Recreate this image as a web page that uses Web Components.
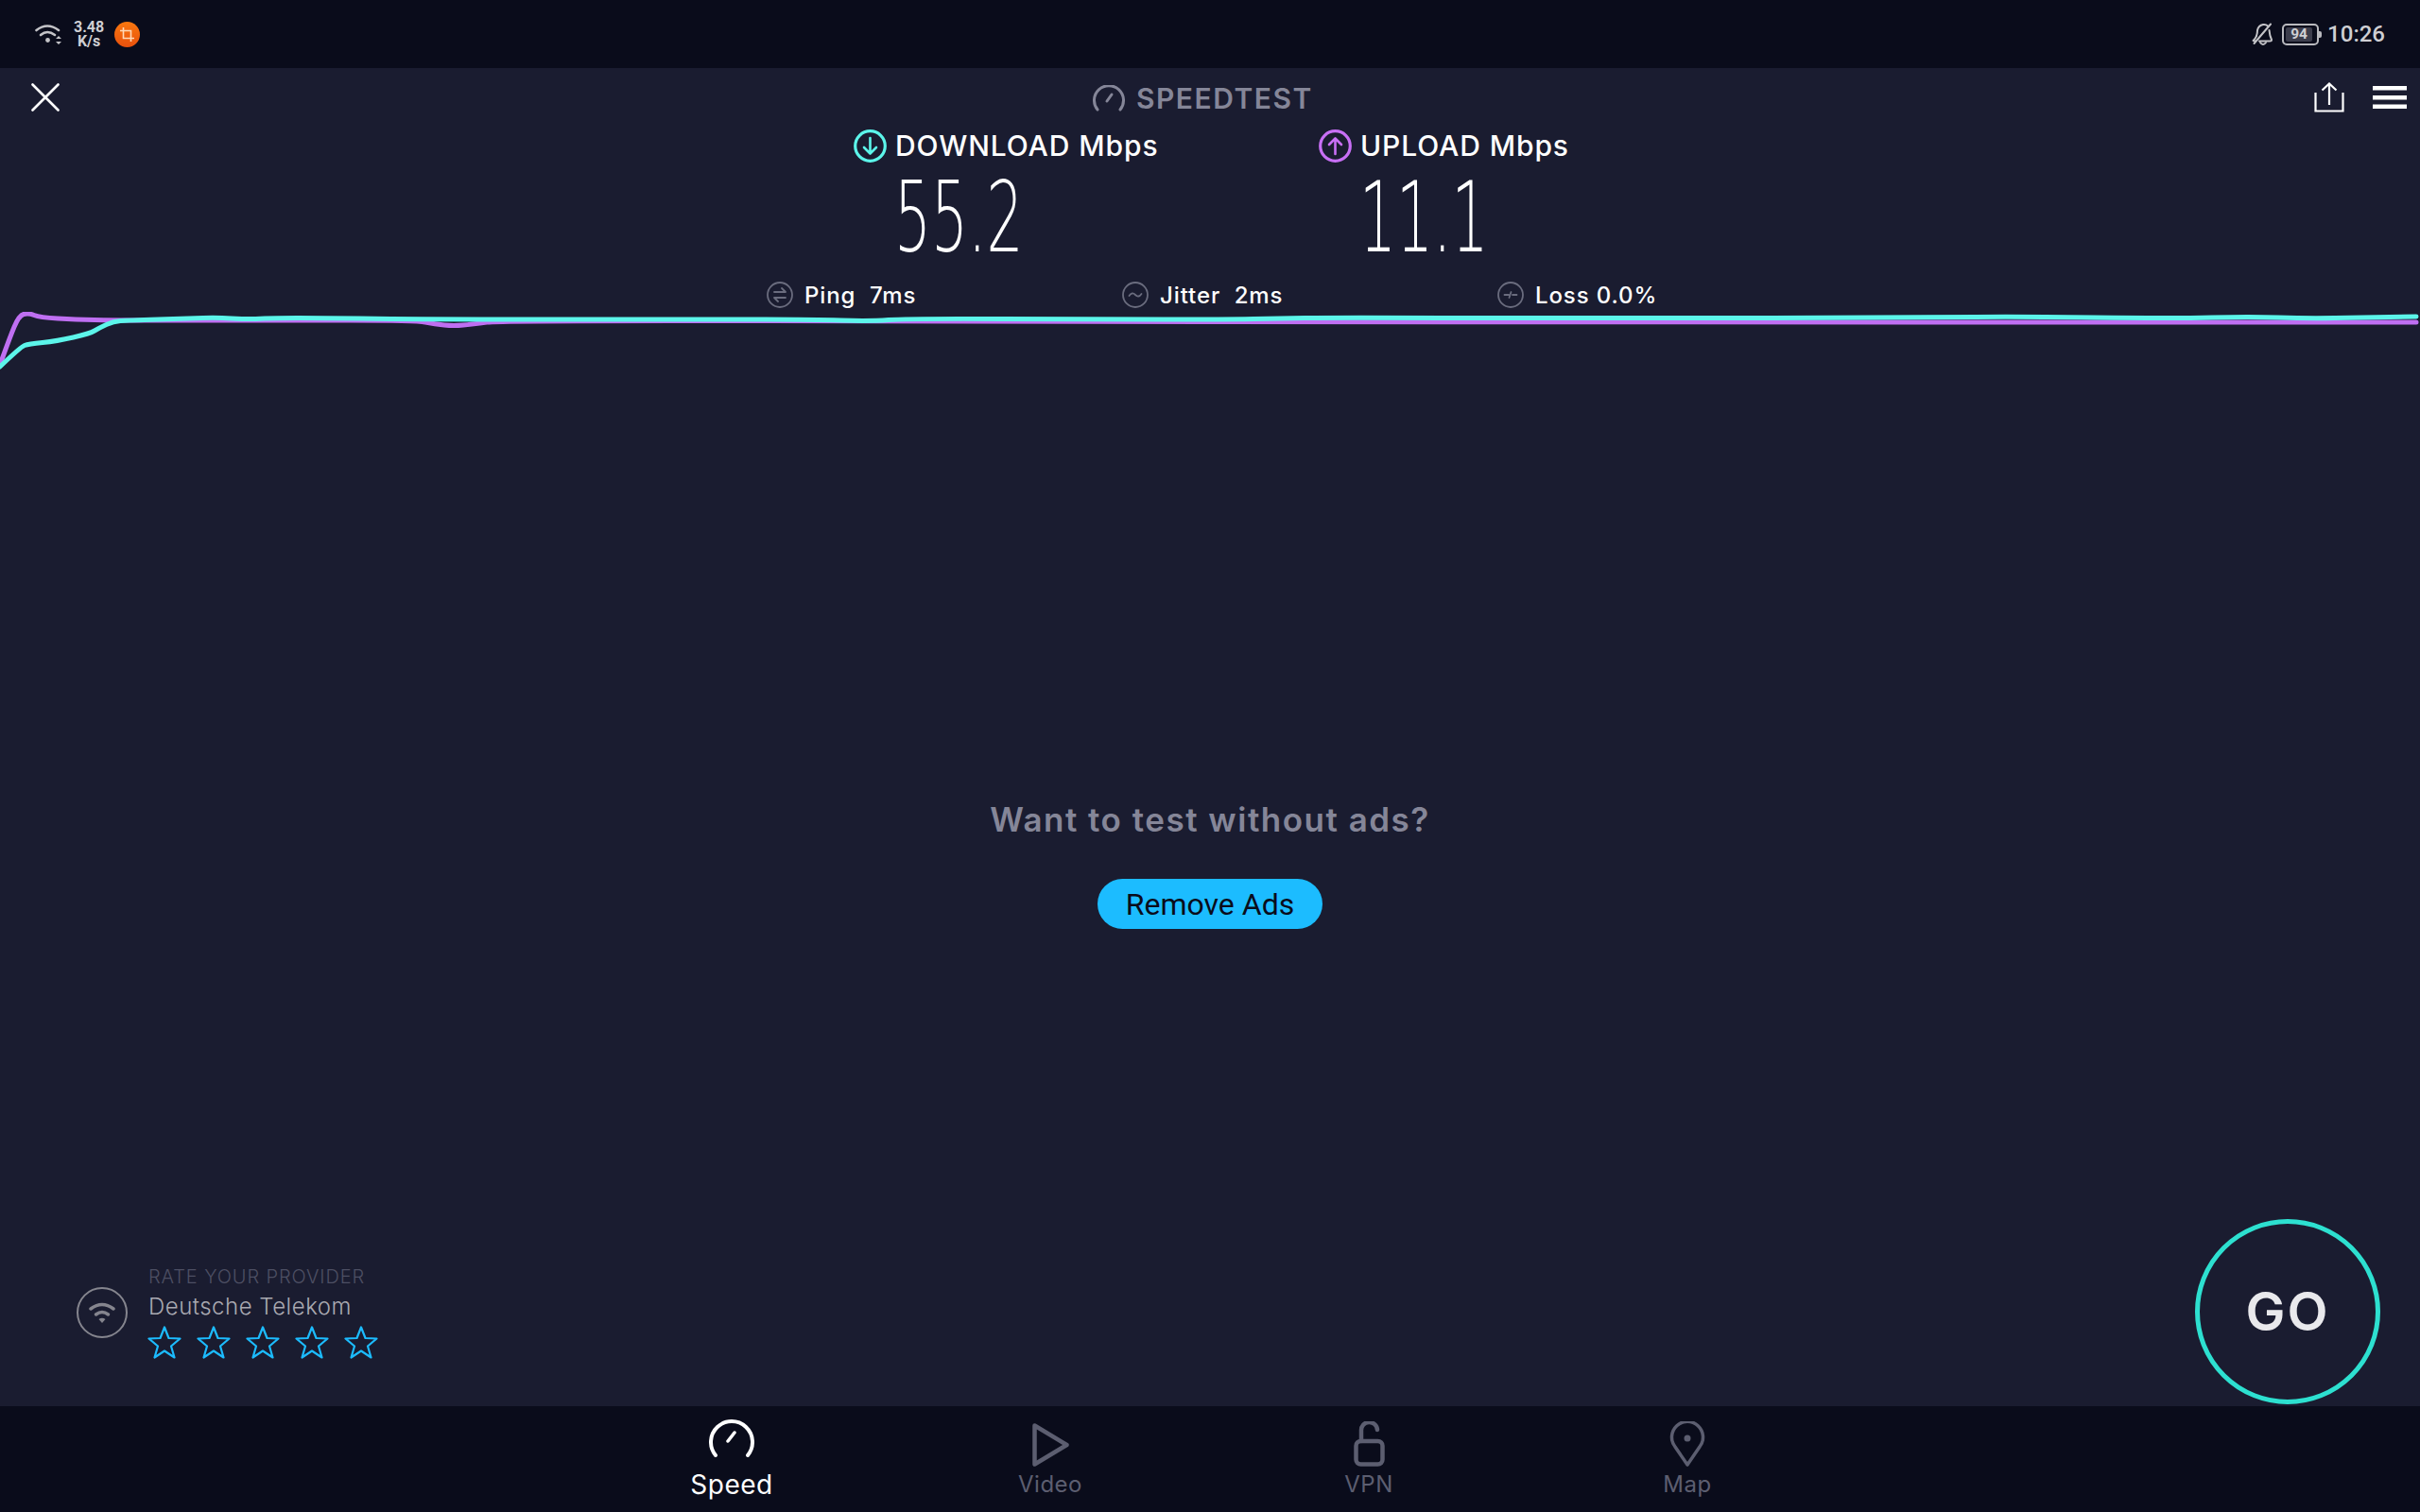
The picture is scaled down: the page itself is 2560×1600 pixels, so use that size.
<!DOCTYPE html>
<html>
<head>
<meta charset="utf-8">
<title>Speedtest</title>
<style>
    html, body { margin: 0; padding: 0; background: #1a1c30; }
    body { width: 2560px; height: 1600px; overflow: hidden; }
    speed-app { font-family: "Inter", "Noto Sans", sans-serif; }
</style>
</head>
<body>
<speed-app></speed-app>

<script>
// status bar on top of the app
class StatusBar extends HTMLElement {
    constructor() {
        super();
        this.attachShadow({ mode: 'open' }).innerHTML = `
            <style>
                :host { display: flex; align-items: center; height: 72px; background: #0a0c1b; color: #cfcfd3; font-family: "Roboto", sans-serif; padding: 0 37px; box-sizing: border-box; }
                .left, .right { display: flex; align-items: center; }
                .right { margin-left: auto; }
                .rate { font-size: 16px; font-weight: 700; line-height: 15px; text-align: center; margin-left: 11px; }
                .dot { width: 27px; height: 27px; border-radius: 50%; background: linear-gradient(#f9780f, #e8500d); margin-left: 11px; display: flex; align-items: center; justify-content: center; }
                .time { font-size: 24px; font-weight: 500; margin-left: 9px; }
                .batt { position: relative; width: 39px; height: 23px; border: 2px solid #b9b9be; border-radius: 5px; box-sizing: border-box; margin-left: 10px; display: flex; align-items: center; padding: 2px; }
                .batt::after { content: ""; position: absolute; right: -5px; top: 6px; width: 3px; height: 7px; background: #b9b9be; border-radius: 0 2px 2px 0; }
                .level { background: #3c3d4c; border-radius: 2px; height: 100%; width: 90%; font-size: 15.500px; font-weight: 700; line-height: 15px; text-align: center; }
                svg { display: block; }
            </style>
            <div class="left">
                <svg width="30" height="22" viewBox="0 0 30 22" fill="none" stroke="#c4c4c8" stroke-width="2.600" stroke-linecap="round">
                    <path d="M1.500 7 Q13 -2 25 7"/><path d="M6 12 Q13 6 21 12"/>
                    <circle cx="13.500" cy="17.500" r="2.400" fill="#c4c4c8" stroke="none"/>
                    <path d="M25 13 l3 3 h-6 z M25 22 l3 -3 h-6 z" fill="#c4c4c8" stroke="none"/>
                </svg>
                <div class="rate">3.48<br>K/s</div>
                <div class="dot">
                    <svg width="15" height="15" viewBox="0 0 15 15" fill="none" stroke="#ffd9b8" stroke-width="1.600"><path d="M3.500 0 V11.500 H15 M0 3.500 H11.500 V15"/></svg>
                </div>
            </div>
            <div class="right">
                <svg width="22" height="25" viewBox="0 0 22 25" fill="none" stroke="#c4c4c8" stroke-width="2" stroke-linecap="round" stroke-linejoin="round">
                    <path d="M5 14 Q6 11 6 8 Q7 3 12 2 Q15 1.500 17 3.500"/>
                    <path d="M18.500 8 Q19 14 21 18 Q21 19.500 19 19.500 H8"/>
                    <path d="M5 14 Q4 17 1.500 19 L4 19.500"/>
                    <path d="M20 1.500 L2.500 22"/><path d="M9 21 Q12 25 15 21"/>
                </svg>
                <div class="batt"><div class="level">94</div></div>
                <div class="time">10:26</div>
            </div>
        `;
    }
}

class AppHeader extends HTMLElement {
    constructor() {
        super();
        this.attachShadow({ mode: 'open' }).innerHTML = `
            <style>
                :host { display: grid; grid-template-columns: 1123px auto 1fr; align-items: center; height: 62px; padding: 0 14px 0 33px; }
                .title { display: flex; align-items: center; gap: 12px; color: #858698; font-size: 30px; font-weight: 600; letter-spacing: 1.500px; padding-top: 2px; }
                .actions { display: flex; justify-content: flex-end; align-items: center; gap: 30px; }
                svg { display: block; }
            </style>
            <svg width="30" height="30" viewBox="0 0 30 30" stroke="#fff" stroke-width="2.600" stroke-linecap="round"><path d="M1.500 1.500 L28.500 28.500 M28.500 1.500 L1.500 28.500"/></svg>
            <div class="title">
                <svg width="34" height="28" viewBox="0 0 34 28" fill="none" stroke="#858698" stroke-width="3" stroke-linecap="round"><path d="M5 26 A15.500 15.500 0 1 1 29 26"/><path d="M15 17 L20 10"/></svg>
                SPEEDTEST
            </div>
            <div class="actions">
                <svg width="32" height="32" viewBox="0 0 32 32" fill="none" stroke="#fff" stroke-width="2.200"><path d="M1.500 11 V30.500 H30.500 V11"/><path d="M16 24 V2 M8.500 8.500 L16 1.500 L23.500 8.500"/></svg>
                <svg width="36" height="24" viewBox="0 0 36 24" fill="#fff"><rect width="36" height="4.500" y="0"/><rect width="36" height="4.500" y="10"/><rect width="36" height="4.500" y="19.500"/></svg>
            </div>
        `;
    }
}

class ResultColumn extends HTMLElement {
    constructor() {
        super();
        const color = this.getAttribute('color');
        const arrow = this.getAttribute('dir') === 'up'
            ? 'M17.500 26 V10 M11 16 L17.500 9.500 L24 16'
            : 'M17.500 9 V25 M11 19 L17.500 25.500 L24 19';
        this.attachShadow({ mode: 'open' }).innerHTML = `
            <style>
                :host { display: block; }
                .label { display: flex; align-items: center; gap: 9px; color: #fff; font-size: 30px; font-weight: 500; letter-spacing: .9px; height: 36px; white-space: nowrap; }
                .num { color: #fff; font-family: "DejaVu Sans", sans-serif; font-weight: 200; font-size: 104px; line-height: 107px; margin: 5px 0 0 43px; transform: scaleX(.59); transform-origin: left center; white-space: nowrap; }
                svg { display: block; }
            </style>
            <div class="label">
                <svg width="35" height="35" viewBox="0 0 35 35" fill="none" stroke="${color}" stroke-width="2.600" stroke-linecap="round" stroke-linejoin="round">
                    <circle cx="17.500" cy="17.500" r="15.800" stroke-width="3.200"/><path d="${arrow}"/>
                </svg>
                <slot name="label"></slot>
            </div>
            <div class="num"><slot></slot></div>
        `;
    }
}

class SpeedResults extends HTMLElement {
    constructor() {
        super();
        this.attachShadow({ mode: 'open' }).innerHTML = `
            <style>
                :host { display: grid; grid-template-columns: 492px 320px; height: 161px; padding: 2px 0 0 903px; box-sizing: border-box; }
            </style>
            <slot></slot>
        `;
    }
}

class StatItem extends HTMLElement {
    constructor() {
        super();
        const glyphs = {
            ping: '<path d="M8 11 H20 L16 7 M20 17 H8 L12 21" stroke-linejoin="round"/>',
            jitter: '<path d="M7.500 15 Q10.500 10.500 14 14 T20.500 13" />',
            loss: '<path d="M7.500 14 H12 M12.500 17 L14.500 11 M16 14 H20.500"/>'
        };
        this.attachShadow({ mode: 'open' }).innerHTML = `
            <style>
                :host { display: flex; align-items: center; gap: 12px; color: #fff; font-size: 24px; font-weight: 500; letter-spacing: .9px; }
                .text { white-space: pre; }
                svg { display: block; flex: none; }
            </style>
            <svg width="28" height="28" viewBox="0 0 28 28" fill="none" stroke="#6a6c7e" stroke-width="1.800" stroke-linecap="round">
                <circle cx="14" cy="14" r="13"/>${glyphs[this.getAttribute('kind')]}
            </svg>
            <span class="text"><slot></slot></span>
        `;
    }
}

class StatRow extends HTMLElement {
    constructor() {
        super();
        this.attachShadow({ mode: 'open' }).innerHTML = `
            <style>
                :host { display: grid; grid-template-columns: 376px 397px auto; height: 32px; padding-left: 811px; align-items: center; margin: 1px 0 2px; }
            </style>
            <slot></slot>
        `;
    }
}

class SpeedGraph extends HTMLElement {
    constructor() {
        super();
        const up = [[0,386],[10,358],[20,334],[30,331],[42,336],[80,338],[120,339],[300,339],[440,339],[460,343],[480,345],[500,343],[530,339],[1100,340],[1500,341],[2556,341]];
        const down = [[0,388],[22,367],[30,364],[60,361],[95,353],[105,347],[120,340],[135,339],[200,337],[230,336],[260,338],[300,336],[460,338],[600,338],[700,338],[760,338],[860,338],[920,340],[960,337],[1160,338],[1303,338],[1350,337],[1411,336],[1700,337],[2050,336],[2130,335],[2300,337],[2380,335],[2440,337],[2500,336],[2556,335]];
        this.attachShadow({ mode: 'open' }).innerHTML = `
            <style>
                :host { display: block; height: 68px; }
                svg { display: block; }
            </style>
            <svg width="2560" height="68" viewBox="0 330 2560 68" fill="none" stroke-width="5" stroke-linecap="round" stroke-linejoin="round">
                <path stroke="#bf6ff2" d="${this.smooth(up)}"/>
                <path stroke="#5cf5ea" d="${this.smooth(down)}"/>
            </svg>
        `;
    }

    smooth(pts) {
        let d = `M${pts[0][0]} ${pts[0][1]}`;
        for (let i = 1; i < pts.length - 1; i++) {
            const mx = (pts[i][0] + pts[i + 1][0]) / 2;
            const my = (pts[i][1] + pts[i + 1][1]) / 2;
            d += ` Q${pts[i][0]} ${pts[i][1]} ${mx} ${my}`;
        }
        const last = pts[pts.length - 1];
        return d + ` L${last[0]} ${last[1]}`;
    }
}

class AdPrompt extends HTMLElement {
    constructor() {
        super();
        this.attachShadow({ mode: 'open' }).innerHTML = `
            <style>
                :host { display: flex; flex-direction: column; align-items: center; margin-top: 447px; }
                p { margin: 0; color: #858698; font-size: 35px; line-height: 44px; font-weight: 600; letter-spacing: 1.500px; }
                button { margin-top: 41px; width: 238px; height: 53px; border: 0; border-radius: 27px; background: #1cbcff; color: #0a0c1b; font-family: "Roboto", sans-serif; font-size: 32px; padding: 0; }
            </style>
            <p>Want to test without ads?</p>
            <button>Remove Ads</button>
        `;
    }
}

class ProviderRating extends HTMLElement {
    constructor() {
        super();
        const star = `<svg width="36" height="35" viewBox="0 0 36 35" fill="none" stroke="#1cbcff" stroke-width="2.200" stroke-linejoin="round"><path d="M18 1.500 L22.500 13 L34.500 13.500 L25 21.500 L28.500 33.500 L18 26.500 L7.500 33.500 L11 21.500 L1.500 13.500 L13.500 13 Z"/></svg>`;
        this.attachShadow({ mode: 'open' }).innerHTML = `
            <style>
                :host { display: flex; align-items: center; gap: 22px; margin-bottom: 48px; }
                .ring { width: 54px; height: 54px; border: 2px solid #85858e; border-radius: 50%; box-sizing: border-box; display: flex; align-items: center; justify-content: center; margin-top: -2px; }
                .small { color: #4d4f63; font-size: 20px; font-weight: 300; line-height: 20px; letter-spacing: .9px; margin-top: -1px; }
                .name { color: #a9a9b1; font-size: 24px; font-weight: 300; line-height: 30px; margin-top: 7px; letter-spacing: .5px; }
                .stars { display: flex; gap: 16px; margin-top: 5px; margin-left: -1px; }
                svg { display: block; }
            </style>
            <div class="ring">
                <svg width="30" height="24" viewBox="0 0 30 24" fill="none" stroke="#85858e" stroke-width="3.500" stroke-linecap="round"><path d="M3 8 Q15 -1 27 8"/><path d="M8.500 14 Q15 9 21.500 14"/><path d="M11.500 19 L15 23 L18.500 19 Q15 16.500 11.500 19 Z" fill="#85858e" stroke="none"/></svg>
            </div>
            <div>
                <div class="small">RATE YOUR PROVIDER</div>
                <div class="name">Deutsche Telekom</div>
                <div class="stars">${star}${star}${star}${star}${star}</div>
            </div>
        `;
    }
}

class GoButton extends HTMLElement {
    constructor() {
        super();
        this.attachShadow({ mode: 'open' }).innerHTML = `
            <style>
                :host { display: flex; align-items: center; justify-content: center; width: 196px; height: 196px; border: 5px solid #2de0d0; border-radius: 50%; box-sizing: border-box; color: #e9e9ec; font-size: 56px; font-weight: 600; letter-spacing: 2px; }
            </style>
            GO
        `;
    }
}

class TabItem extends HTMLElement {
    constructor() {
        super();
        this.attachShadow({ mode: 'open' }).innerHTML = `
            <style>
                :host { display: flex; flex-direction: column; align-items: center; color: #5c5e70; font-size: 24px; font-weight: 400; letter-spacing: .5px; }
                :host([active]) { color: #fff; font-size: 28px; }
                .icon { height: 64px; display: flex; align-items: flex-end; }
                :host([active]) .icon { height: 54px; margin-bottom: 10px; }
                ::slotted(svg) { display: block; }
                .text { line-height: 32px; margin-top: 3px; }
            </style>
            <div class="icon"><slot name="icon"></slot></div>
            <div class="text"><slot></slot></div>
        `;
    }
}

class TabBar extends HTMLElement {
    constructor() {
        super();
        this.attachShadow({ mode: 'open' }).innerHTML = `
            <style>
                :host { display: grid; grid-template-columns: repeat(4, 337px); justify-content: center; height: 112px; background: #0a0c1b; box-sizing: border-box; padding-right: 1px; }
            </style>
            <slot></slot>
        `;
    }
}

class SpeedApp extends HTMLElement {
    constructor() {
        super();
        this.attachShadow({ mode: 'open' }).innerHTML = `
            <style>
                :host { display: flex; flex-direction: column; width: 2560px; height: 1600px; background: #1a1c30; }
                main { flex: 1; display: flex; flex-direction: column; min-height: 0; }
                .bottom { margin-top: auto; display: flex; justify-content: space-between; align-items: flex-end; padding: 0 42px 2px 81px; }
            </style>
            <status-bar></status-bar>
            <main>
                <app-header></app-header>
                <speed-results>
                    <result-column color="#5cf5ea" dir="down"><span slot="label">DOWNLOAD Mbps</span>55.2</result-column>
                    <result-column color="#c86ff5" dir="up"><span slot="label">UPLOAD Mbps</span>11.1</result-column>
                </speed-results>
                <stat-row>
                    <stat-item kind="ping">Ping  7ms</stat-item>
                    <stat-item kind="jitter">Jitter  2ms</stat-item>
                    <stat-item kind="loss">Loss 0.0%</stat-item>
                </stat-row>
                <speed-graph></speed-graph>
                <ad-prompt></ad-prompt>
                <div class="bottom">
                    <provider-rating></provider-rating>
                    <go-button></go-button>
                </div>
            </main>
            <tab-bar>
                <tab-item active>
                    <svg slot="icon" width="48" height="42" viewBox="0 0 48 42" fill="none" stroke="#fff" stroke-width="4" stroke-linecap="round"><path d="M7 40 A22 22 0 1 1 41 40"/><path d="M20 25 L27 16" stroke-width="3.500"/></svg>
                    Speed
                </tab-item>
                <tab-item>
                    <svg slot="icon" width="39" height="46" viewBox="0 0 39 46" fill="none" stroke="#5c5e70" stroke-width="4.500" stroke-linejoin="round"><path d="M2.500 2.500 L36.500 23 L2.500 43.500 Z"/></svg>
                    Video
                </tab-item>
                <tab-item>
                    <svg slot="icon" width="33" height="48" viewBox="0 0 33 48" fill="none" stroke="#5c5e70" stroke-width="4.500" stroke-linecap="round"><path d="M8 21 V10 A8.500 8.500 0 0 1 25 9"/><rect x="2.500" y="21" width="28" height="24.500" rx="5"/></svg>
                    VPN
                </tab-item>
                <tab-item>
                    <svg slot="icon" width="38" height="48" viewBox="0 0 38 48" fill="none" stroke="#5c5e70" stroke-width="3.500" stroke-linejoin="round"><path d="M19 46 L6 27 A16.500 16.500 0 1 1 32 27 Z"/><circle cx="19" cy="18" r="3.500" fill="#5c5e70" stroke="none"/></svg>
                    Map
                </tab-item>
            </tab-bar>
        `;
    }
}

customElements.define('status-bar', StatusBar);
customElements.define('app-header', AppHeader);
customElements.define('result-column', ResultColumn);
customElements.define('speed-results', SpeedResults);
customElements.define('stat-item', StatItem);
customElements.define('stat-row', StatRow);
customElements.define('speed-graph', SpeedGraph);
customElements.define('ad-prompt', AdPrompt);
customElements.define('provider-rating', ProviderRating);
customElements.define('go-button', GoButton);
customElements.define('tab-item', TabItem);
customElements.define('tab-bar', TabBar);
customElements.define('speed-app', SpeedApp);
</script>
</body>
</html>
